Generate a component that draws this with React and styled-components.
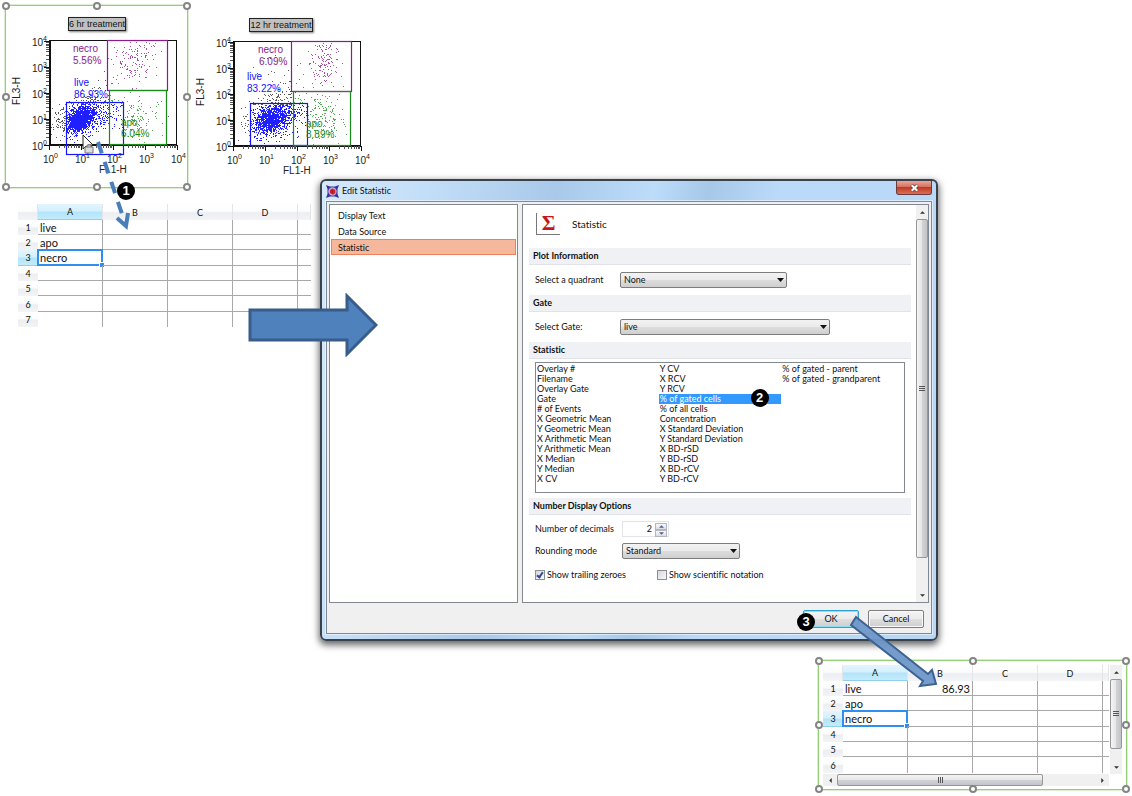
import React, { useState } from "react";
import styled, { createGlobalStyle, css } from "styled-components";

const GlobalStyle = createGlobalStyle`
  * {
    box-sizing: border-box;
  }

  body {
    margin: 0;
    background: #fff;
    color: #111;
    font-family: Lato, "Open Sans", sans-serif;
    font-size: 9px;
    font-variant-ligatures: none;
    line-height: 10px;
  }

  button,
  input,
  select {
    font: inherit;
    font-variant-ligatures: none;
    color: inherit;
    margin: 0;
  }
`;

/* ---------- scatter plots ---------- */

const PLOT_W = 128;
const PLOT_H = 105;

const GATE_COLORS = {
  live: "#1414ff",
  necro: "#8b1a8b",
  apo: "#1a8b1a",
  none: "#222",
};

const makeRandom = (seed) => {
  let s = seed;
  return () => {
    s = (s * 16807) % 2147483647;
    return s / 2147483647;
  };
};

const makeDots = ({ seed, clusters, gates }) => {
  const random = makeRandom(seed);
  const gauss = () =>
    Math.sqrt(-2 * Math.log(random())) * Math.cos(2 * Math.PI * random());
  const paths = { live: "", necro: "", apo: "", none: "" };

  clusters.forEach(([n, cx, cy, sx, sy, tilt]) => {
    for (let i = 0; i < n; i++) {
      const g = gauss();
      const x = Math.round(cx + g * sx);
      const y = Math.round(cy + gauss() * sy - g * tilt);
      if (x < 2 || x > PLOT_W - 3 || y < 2 || y > PLOT_H - 2) continue;
      const gate = Object.keys(gates).find((key) => {
        const [gx, gy, gw, gh] = gates[key];
        return x > gx && x < gx + gw && y > gy && y < gy + gh;
      });
      paths[gate || "none"] += `M${x} ${y}h1`;
    }
  });
  return paths;
};

const plots = [
  {
    title: "6 hr treatment",
    selected: true,
    seed: 4711,
    gates: {
      live: [17, 63, 57, 52],
      necro: [58, 1, 60, 50],
      apo: [60, 51, 57, 54],
    },
    clusters: [
      [1250, 30, 79, 6, 6, 2],
      [620, 38, 76, 13, 9, 3],
      [45, 12, 79, 5, 9, 0],
      [26, 40, 60, 16, 8, 0],
      [110, 86, 18, 9, 12, 5],
      [45, 84, 26, 14, 14, 0],
      [120, 87, 78, 11, 12, 0],
    ],
    labels: [
      ["necro", "necro", 24, 12],
      ["necro", "5.56%", 24, 24],
      ["live", "live", 25, 46],
      ["live", "86.93%", 25, 58],
      ["apo", "apo", 72, 86],
      ["apo", "6.04%", 72, 97],
    ],
  },
  {
    title: "12 hr treatment",
    seed: 90210,
    gates: {
      live: [17, 63, 57, 42],
      necro: [58, 1, 60, 50],
      apo: [60, 51, 57, 54],
    },
    clusters: [
      [950, 37, 78, 8, 6, 2],
      [620, 43, 77, 13, 9, 3],
      [14, 12, 80, 4, 9, 0],
      [80, 45, 58, 13, 6, 3],
      [14, 40, 30, 12, 12, 0],
      [120, 91, 19, 7, 12, 4],
      [40, 84, 28, 14, 12, 0],
      [160, 88, 75, 11, 12, 0],
    ],
    labels: [
      ["necro", "necro", 25, 12],
      ["necro", "6.09%", 26, 24],
      ["live", "live", 14, 39],
      ["live", "83.22%", 14, 51],
      ["apo", "apo", 73, 86],
      ["apo", "8.89%", 73, 97],
    ],
  },
].map((plot) => ({ ...plot, dots: makeDots(plot) }));

const DECADES = [0, 1, 2, 3, 4];
const MINOR = [0.3, 0.48, 0.6, 0.7, 0.78, 0.85, 0.9, 0.95];

const minorTicks = () => {
  let d = "";
  [0, 1, 2, 3].forEach((decade) => {
    MINOR.forEach((m) => {
      d += `M${Math.round((decade + m) * 32)} ${PLOT_H}v3`;
      d += `M0 ${Math.round(PLOT_H - (decade + m) * 26)}h-3`;
    });
  });
  return d;
};

const Plot = ({ plot }) => (
  <Figure>
    <figcaption>{plot.title}</figcaption>
    <svg width="184" height="146" viewBox="0 0 184 146" role="img">
      <g transform="translate(44 9)">
        <g shapeRendering="crispEdges" fill="none">
          {Object.entries(plot.dots).map(([gate, d]) => (
            <path
              key={gate}
              d={d}
              transform="translate(0 .5)"
              stroke={GATE_COLORS[gate]}
              strokeOpacity={gate === "live" ? 0.95 : 0.75}
            />
          ))}
          <path d={`M0 .5H${PLOT_W}M${PLOT_W - 0.5} 0V${PLOT_H}`} stroke="#111" />
          <path d={`M.5 0V${PLOT_H}H${PLOT_W}`} stroke="#111" strokeWidth="2" />
          <path d={minorTicks()} stroke="#555" />
          {DECADES.map((n) => (
            <path
              key={n}
              d={`M${n * 32} ${PLOT_H}v5M0 ${PLOT_H - n * 26}h-5`}
              stroke="#111"
            />
          ))}
        </g>
        {Object.entries(plot.gates).map(([gate, [x, y, w, h]]) => (
          <rect
            key={gate}
            x={x + 0.5}
            y={y - 0.5}
            width={w}
            height={h}
            fill="none"
            stroke={GATE_COLORS[gate]}
            strokeWidth="1.2"
          />
        ))}
        <PlotText>
          {DECADES.map((n) => (
            <React.Fragment key={n}>
              <text x="-17" y={PLOT_H - n * 26 + 5}>10</text>
              <text className="exponent" x="-6" y={PLOT_H - n * 26}>{n}</text>
              <text x={n * 32 - 6} y={PLOT_H + 18}>10</text>
              <text className="exponent" x={n * 32 + 5} y={PLOT_H + 13}>{n}</text>
            </React.Fragment>
          ))}
          <text x="50" y={PLOT_H + 28}>FL1-H</text>
          <text textAnchor="middle" transform="translate(-29 51) rotate(-90)">
            FL3-H
          </text>
          {plot.labels.map(([gate, text, x, y]) => (
            <text key={text} x={x} y={y} fill={GATE_COLORS[gate]}>{text}</text>
          ))}
        </PlotText>
      </g>
    </svg>
    {plot.selected && <Selection />}
  </Figure>
);

/* ---------- small parts ---------- */

const Selection = () => (
  <SelectionFrame>
    {[0, 50, 100].flatMap((x) =>
      [0, 50, 100]
        .filter((y) => x !== 50 || y !== 50)
        .map((y) => <Handle key={`${x}-${y}`} $x={x} $y={y} />)
    )}
  </SelectionFrame>
);

const Triangle = ({ turn = 0 }) => (
  <svg width="5" height="5" viewBox="0 0 6 6" aria-hidden="true">
    <path d="M0 4.5L3 1.5L6 4.5Z" fill="#333" transform={`rotate(${turn} 3 3)`} />
  </svg>
);

const ScrollBar = ({ horizontal, size }) => (
  <Bar $horizontal={horizontal} aria-hidden="true">
    <i><Triangle turn={horizontal ? -90 : 0} /></i>
    <Track $horizontal={horizontal}>
      <Thumb $horizontal={horizontal} $size={size}>
        <svg width="7" height="7" viewBox="0 0 7 7">
          <path
            d="M0 1.5H6M0 3.5H6M0 5.5H6"
            stroke="#555"
            transform={horizontal ? "rotate(90 3.5 3.5)" : undefined}
          />
        </svg>
      </Thumb>
    </Track>
    <i><Triangle turn={horizontal ? 90 : 180} /></i>
  </Bar>
);

const Sheet = ({ rows, value }) => {
  const names = ["live", "apo", "necro"];
  return (
    <SheetTable>
      <colgroup>
        <col className="row-number" />
        <col className="wide" />
        <col className="wide" />
        <col className="wide" />
        <col className="wide" />
        <col />
      </colgroup>
      <thead>
        <tr>
          <th></th>
          <th className="active">A</th>
          <th>B</th>
          <th>C</th>
          <th>D</th>
          <th></th>
        </tr>
      </thead>
      <tbody>
        {Array.from({ length: rows }, (_, i) => (
          <tr key={i}>
            <th className={i === 2 ? "active" : undefined}>{i + 1}</th>
            <td className={i === 2 ? "selected" : undefined}>{names[i]}</td>
            <td className="number">{i === 0 ? value : null}</td>
            <td></td>
            <td></td>
            <td></td>
          </tr>
        ))}
      </tbody>
    </SheetTable>
  );
};

/* ---------- dialog ---------- */

const pages = ["Display Text", "Data Source", "Statistic"];

const statistics = [
  "Overlay #",
  "Filename",
  "Overlay Gate",
  "Gate",
  "# of Events",
  "X Geometric Mean",
  "Y Geometric Mean",
  "X Arithmetic Mean",
  "Y Arithmetic Mean",
  "X Median",
  "Y Median",
  "X CV",
  "Y CV",
  "X RCV",
  "Y RCV",
  "% of gated cells",
  "% of all cells",
  "Concentration",
  "X Standard Deviation",
  "Y Standard Deviation",
  "X BD-rSD",
  "Y BD-rSD",
  "X BD-rCV",
  "Y BD-rCV",
  "% of gated - parent",
  "% of gated - grandparent",
];

const SelectBox = ({ id, width, options }) => (
  <SelectWrap $width={width}>
    <select id={id}>
      {options.map((option) => (
        <option key={option}>{option}</option>
      ))}
    </select>
    <svg width="7" height="4" viewBox="0 0 7 4" aria-hidden="true">
      <path d="M0 0H7L3.5 4Z" fill="#111" />
    </svg>
  </SelectWrap>
);

const EditStatistic = () => {
  const [page, setPage] = useState("Statistic");
  const [statistic, setStatistic] = useState("% of gated cells");
  const [decimals, setDecimals] = useState(2);

  return (
    <Dialog role="dialog" aria-labelledby="dialog-title">
      <TitleBar>
        <svg width="13" height="13" viewBox="0 0 13 13" aria-hidden="true">
          <path
            d="M0 0L4 1.5H9L13 0L11.5 4V9L13 13L9 11.5H4L0 13L1.5 9V4Z"
            fill="#3b2f9c"
          />
          <circle cx="6.5" cy="6.5" r="4.2" fill="#b9a9d8" />
          <path d="M4 5L6.5 3.5L9.3 5V8L7 9.8L4 8Z" fill="#d51f2c" />
          <path d="M6.3 5V8.5" stroke="#7d1020" strokeWidth=".8" />
        </svg>
        <h1 id="dialog-title">Edit Statistic</h1>
        <CloseButton aria-label="Close">
          <svg width="9" height="8" viewBox="0 0 9 8">
            <path d="M1.5 1L7.5 7M7.5 1L1.5 7" stroke="#6b3a3a" strokeWidth="3.4" />
            <path d="M1.7 1.2L7.3 6.8M7.3 1.2L1.7 6.8" stroke="#fff" strokeWidth="2" />
          </svg>
        </CloseButton>
      </TitleBar>

      <DialogBody>
        <Panes>
          <PageList>
            {pages.map((name) => (
              <PageButton
                key={name}
                $active={name === page}
                onClick={() => setPage(name)}
              >
                {name}
              </PageButton>
            ))}
          </PageList>

          <Settings>
            <Form>
              <FormTitle>
                <SumIcon aria-hidden="true">Σ</SumIcon>
                Statistic
              </FormTitle>

              <SectionTitle>Plot Information</SectionTitle>
              <Field $height={30} $label={85}>
                <label htmlFor="quadrant">Select a quadrant</label>
                <SelectBox id="quadrant" width={167} options={["None"]} />
              </Field>

              <SectionTitle>Gate</SectionTitle>
              <Field $height={30} $label={85}>
                <label htmlFor="gate">Select Gate:</label>
                <SelectBox id="gate" width={210} options={["live", "apo", "necro"]} />
              </Field>

              <SectionTitle>Statistic</SectionTitle>
              <StatisticList role="listbox" aria-label="Statistic">
                {statistics.map((name) => (
                  <StatisticItem
                    key={name}
                    role="option"
                    aria-selected={name === statistic}
                    $active={name === statistic}
                    onClick={() => setStatistic(name)}
                  >
                    {name}
                    {name === "% of gated cells" && <Badge $x={92} $y={-5}>2</Badge>}
                  </StatisticItem>
                ))}
              </StatisticList>

              <SectionTitle>Number Display Options</SectionTitle>
              <Options>
                <Field $height={22} $label={87}>
                  <label htmlFor="decimals">Number of decimals</label>
                  <Spinner>
                    <input
                      id="decimals"
                      value={decimals}
                      onChange={(e) => setDecimals(Number(e.target.value) || 0)}
                    />
                    <div>
                      <button aria-label="More" onClick={() => setDecimals(decimals + 1)}>
                        <Triangle />
                      </button>
                      <button
                        aria-label="Fewer"
                        onClick={() => setDecimals(Math.max(0, decimals - 1))}
                      >
                        <Triangle turn={180} />
                      </button>
                    </div>
                  </Spinner>
                </Field>
                <Field $height={22} $label={87}>
                  <label htmlFor="rounding">Rounding mode</label>
                  <SelectBox id="rounding" width={118} options={["Standard"]} />
                </Field>
                <Checks>
                  <label>
                    <input type="checkbox" defaultChecked />
                    Show trailing zeroes
                  </label>
                  <label>
                    <input type="checkbox" />
                    Show scientific notation
                  </label>
                </Checks>
              </Options>
            </Form>
            <ScrollBar size={92} />
          </Settings>
        </Panes>

        <Footer>
          <PushButton $primary>
            OK
            <Badge $x={-7} $y={2}>3</Badge>
          </PushButton>
          <PushButton>Cancel</PushButton>
        </Footer>
      </DialogBody>

      <BlockArrow width="130" height="64" viewBox="0 0 130 64" aria-hidden="true">
        <path
          d="M2 17H99V3L128 32L99 61V47H2Z"
          fill="#4f81bd"
          stroke="#385d8a"
          strokeWidth="3"
        />
      </BlockArrow>
    </Dialog>
  );
};

const App = () => (
  <Page>
    <GlobalStyle />
    <PlotRow>
      {plots.map((plot) => (
        <Plot key={plot.title} plot={plot} />
      ))}
    </PlotRow>

    <Middle>
      <SourceSheet>
        <Sheet rows={7} />
        <DragPath width="60" height="100" viewBox="0 0 60 100" aria-hidden="true">
          <path
            d="M7 0V14L10 11L13 17L15 16L12 10H17Z"
            fill="#fff"
            stroke="#222"
            strokeWidth="1"
          />
          <path d="M9 12H17V18H9ZM11 12V10H15V12" fill="#ddd" stroke="#777" />
          <path
            d="M22 7L50 91"
            fill="none"
            stroke="#4a7ebb"
            strokeWidth="4"
            strokeDasharray="12 9"
          />
          <path d="M41 83L50 91L52 78" fill="none" stroke="#4a7ebb" strokeWidth="4" />
        </DragPath>
        <Badge $x={99} $y={-22}>1</Badge>
      </SourceSheet>
      <EditStatistic />
    </Middle>

    <Result>
      <div>
        <Sheet rows={6} value="86.93" />
        <ScrollBar horizontal size={80} />
      </div>
      <ScrollBar size={86} />
      <Selection />
      <ResultArrow width="92" height="74" viewBox="0 0 92 74" aria-hidden="true">
        <path
          d="M8 3L80 60L84 56L88 70L72 72L75 67L3 11Z"
          fill="#6f97c9"
          fillOpacity=".95"
          stroke="#3c6292"
          strokeWidth="2"
        />
      </ResultArrow>
    </Result>
  </Page>
);

/* ---------- styles ---------- */

const Page = styled.main`
  display: flex;
  flex-direction: column;
  overflow: hidden;
`;

const PlotRow = styled.section`
  display: flex;
  height: 179px;
  padding: 5px 5px 0;
`;

const Figure = styled.figure`
  position: relative;
  display: flex;
  flex-direction: column;
  align-items: center;
  flex: none;
  width: 184px;
  height: 184px;
  margin: 0;
  padding-top: 12px;
  font-family: "Liberation Sans", Arial, sans-serif;

  & + & {
    padding-top: 13px;
  }

  figcaption {
    padding: 1px 0;
    border: 1px solid #222;
    background: #c0c0c0;
    box-shadow: 1px 1px 2px rgba(0, 0, 0, 0.5);
    color: #111;
    font-size: 9px;
    line-height: 10px;
  }

  svg {
    flex: none;
    overflow: visible;
  }
`;

const PlotText = styled.g`
  font-size: 10px;
  fill: #222;

  .exponent {
    font-size: 7px;
  }
`;

const SelectionFrame = styled.div`
  position: absolute;
  inset: 0 1px 1px 0;
  border: 1px solid #92d078;
  box-shadow: 0 0 0 1px rgba(146, 208, 120, 0.35);
  pointer-events: none;
`;

const Handle = styled.span`
  position: absolute;
  left: ${({ $x }) => $x}%;
  top: ${({ $y }) => $y}%;
  width: 8px;
  height: 8px;
  margin: -4px;
  border: 2px solid #858585;
  border-radius: 50%;
  background: #fff;
`;

const Badge = styled.span`
  position: absolute;
  left: ${({ $x }) => $x}px;
  top: ${({ $y }) => $y}px;
  z-index: 3;
  width: 18px;
  height: 18px;
  border-radius: 50%;
  background: #000;
  color: #fff;
  font: 700 13px/18px "Liberation Sans", Arial, sans-serif;
  text-align: center;
`;

const Middle = styled.section`
  display: flex;
  align-items: flex-start;
  gap: 9px;
  padding: 0 194px 0 18px;
`;

const SourceSheet = styled.div`
  position: relative;
  flex: none;
  width: 293px;
  margin-top: 25px;
`;

const headerFill = css`
  background: linear-gradient(#fff 0%, #fbfcfd 45%, #eceef1 55%, #f3f4f6 100%);
`;

const activeFill = css`
  background: linear-gradient(#e3f5fd 0%, #d5f0fd 45%, #b3e4fa 55%, #c4ebfc 100%);
`;

const SheetTable = styled.table`
  width: 100%;
  border-collapse: separate;
  border-spacing: 0;
  table-layout: fixed;

  .row-number {
    width: 20px;
  }

  .wide {
    width: 65px;
  }

  tr {
    height: 15px;
  }

  thead tr,
  tbody tr:nth-child(3n) {
    height: 16px;
  }

  th {
    padding: 0;
    ${headerFill}
    font-size: 9px;
    font-weight: 400;
    line-height: 13px;
  }

  thead th {
    border-right: 1px solid #e3e5e8;
  }

  th.active {
    ${activeFill}
    border-bottom: 1px solid #8fd0ee;
  }

  td {
    position: relative;
    padding: 0 2px;
    border-right: 1px solid #a8a8a8;
    border-bottom: 1px solid #a8a8a8;
    font-size: 11px;
    line-height: 13px;
  }

  td:last-child {
    border-right: 0;
  }

  tr:last-child td {
    border-bottom: 0;
  }

  .number {
    text-align: right;
  }

  .selected::before {
    content: "";
    position: absolute;
    inset: -1px -1px -1px -1px;
    border: 2px solid #2f8ff0;
  }

  .selected::after {
    content: "";
    position: absolute;
    right: -2px;
    bottom: -2px;
    width: 4px;
    height: 4px;
    background: #2f8ff0;
    outline: 1px solid #fff;
  }
`;

const DragPath = styled.svg`
  position: absolute;
  left: 58px;
  top: -69px;
`;

const Dialog = styled.section`
  position: relative;
  flex: 1;
  min-width: 0;
  padding: 0 4px 5px;
  border: 2px solid #39424c;
  border-radius: 6px;
  background: linear-gradient(
    100deg,
    #d5e9fb 0%,
    #c3def8 15%,
    #a9c9ea 34%,
    #bcdcfa 48%,
    #a6c8e9 56%,
    #bbdafa 66%,
    #b7d7f5 100%
  );
  box-shadow: 0 3px 7px 1px rgba(0, 0, 0, 0.6);
`;

const TitleBar = styled.header`
  display: flex;
  align-items: center;
  gap: 3px;
  height: 20px;

  h1 {
    flex: 1;
    margin: 0;
    font-size: 9px;
    font-weight: 400;
  }
`;

const CloseButton = styled.button`
  display: grid;
  place-items: center;
  align-self: flex-start;
  width: 36px;
  height: 14px;
  padding: 0;
  border: 1px solid #6b3b3b;
  border-top: 0;
  border-radius: 0 0 3px 3px;
  background: linear-gradient(#e9a698 0%, #d6715f 45%, #bf3a22 50%, #d9705a 100%);
`;

const DialogBody = styled.div`
  padding: 2px 2px 0;
  border: 1px solid #7e8a99;
  outline: 1px solid rgba(255, 255, 255, 0.5);
  background: #f0f0f0;
`;

const Panes = styled.div`
  display: flex;
  gap: 4px;
`;

const PageList = styled.nav`
  flex: none;
  width: 189px;
  padding: 2px 1px;
  border: 1px solid #828790;
  background: #fff;
`;

const PageButton = styled.button`
  display: block;
  width: 100%;
  height: 16px;
  padding: 0 6px;
  border: 1px solid ${({ $active }) => ($active ? "#f0805c" : "transparent")};
  background: ${({ $active }) => ($active ? "#f6b89c" : "none")};
  text-align: left;
  line-height: 13px;
`;

const Settings = styled.div`
  display: flex;
  flex: 1;
  min-width: 0;
  border: 1px solid #828790;
  background: #fff;
`;

const Form = styled.div`
  flex: 1;
  padding: 0 5px 14px 6px;
`;

const FormTitle = styled.div`
  display: flex;
  align-items: center;
  gap: 12px;
  height: 43px;
  padding: 0 7px 6px;
  font-size: 10px;
`;

const SumIcon = styled.span`
  width: 24px;
  height: 22px;
  border: solid #777;
  border-width: 0 0 1px 1px;
  color: #c8141c;
  font: 700 21px/20px "Liberation Serif", serif;
  text-align: center;
`;

const SectionTitle = styled.h2`
  height: 17px;
  margin: 0;
  padding: 0 4px;
  border-bottom: 1px solid #e2e3e8;
  background: #f0f1f5;
  color: #111;
  font-size: 9px;
  font-weight: 700;
  line-height: 16px;
`;

const Field = styled.div`
  display: flex;
  align-items: center;
  height: ${({ $height }) => $height}px;
  padding-left: 6px;

  label {
    flex: none;
    width: ${({ $label }) => $label}px;
  }
`;

const SelectWrap = styled.div`
  position: relative;
  width: ${({ $width }) => $width}px;

  select {
    display: block;
    width: 100%;
    height: 16px;
    padding: 0 3px;
    appearance: none;
    border: 1px solid #7d7d7d;
    border-radius: 2px;
    background: linear-gradient(#f2f2f2 0%, #ebebeb 48%, #dddddd 52%, #cfcfcf 100%);
    line-height: 14px;
  }

  svg {
    position: absolute;
    right: 3px;
    top: 6px;
    pointer-events: none;
  }
`;

const StatisticList = styled.ul`
  display: grid;
  grid-template-columns: repeat(3, 1fr);
  grid-template-rows: repeat(12, 10px);
  grid-auto-flow: column;
  height: 131px;
  margin: 3px 6px 5px;
  padding: 1px 0;
  border: 1px solid #828790;
  list-style: none;
`;

const StatisticItem = styled.li`
  position: relative;
  padding-left: 1px;
  white-space: nowrap;
  line-height: 10px;

  ${({ $active }) =>
    $active &&
    css`
      background: #3399ff;
      color: #fff;
    `}
`;

const Options = styled.div`
  padding-top: 3px;
`;

const Spinner = styled.div`
  display: flex;
  height: 16px;
  padding: 1px;
  border: 1px solid #e1e4ea;

  input {
    width: 31px;
    padding: 0 3px;
    border: 0;
    background: #fff;
    text-align: right;
  }

  div {
    display: grid;
    width: 12px;
  }

  button {
    display: grid;
    place-items: center;
    padding: 0;
    border: 1px solid #b4b6bd;
    background: linear-gradient(#fafafa, #dcdcdc);
  }

  path {
    fill: #4a5fa8;
  }
`;

const Checks = styled.div`
  display: flex;
  align-items: center;
  height: 26px;
  padding-left: 6px;

  label {
    display: flex;
    align-items: center;
    gap: 2px;
    width: 122px;
    white-space: nowrap;
  }

  input {
    display: flex;
    align-items: flex-start;
    justify-content: center;
    width: 10px;
    height: 10px;
    appearance: none;
    border: 1px solid #8e8f8f;
    background: linear-gradient(135deg, #d5d8dc, #fafafa);
  }

  input:checked::before {
    content: "";
    box-sizing: border-box;
    width: 4px;
    height: 7px;
    border: solid #31479b;
    border-width: 0 2px 2px 0;
    transform: rotate(35deg);
  }
`;

const Footer = styled.footer`
  display: flex;
  justify-content: flex-end;
  gap: 9px;
  padding: 7px 5px 5px;
`;

const PushButton = styled.button`
  position: relative;
  width: 56px;
  height: 18px;
  padding: 0;
  border: 1px solid ${({ $primary }) => ($primary ? "#2ba3d4" : "#7d7d7d")};
  border-radius: 2px;
  background: linear-gradient(#f3f3f3 0%, #ebebeb 48%, #dddddd 52%, #cfcfcf 100%);
  box-shadow: inset 0 0 0 1px ${({ $primary }) => ($primary ? "#8fdcf5" : "#fafafa")};
`;

const BlockArrow = styled.svg`
  position: absolute;
  left: -74px;
  top: 112px;
`;

const Bar = styled.div`
  display: flex;
  flex: none;
  flex-direction: ${({ $horizontal }) => ($horizontal ? "row" : "column")};
  width: ${({ $horizontal }) => ($horizontal ? "auto" : "12px")};
  height: ${({ $horizontal }) => ($horizontal ? "12px" : "auto")};
  background: #f0f0f0;

  i {
    display: grid;
    flex: none;
    place-items: center;
    width: ${({ $horizontal }) => ($horizontal ? "14px" : "12px")};
    height: ${({ $horizontal }) => ($horizontal ? "12px" : "14px")};
  }
`;

const Track = styled.div`
  display: flex;
  flex: 1;
  flex-direction: ${({ $horizontal }) => ($horizontal ? "row" : "column")};
`;

const Thumb = styled.div`
  display: grid;
  flex: 0 0 ${({ $size }) => $size}%;
  place-items: center;
  border: 1px solid #979797;
  border-radius: 2px;
  background: linear-gradient(
    ${({ $horizontal }) => ($horizontal ? "180deg" : "90deg")},
    #f4f4f4 0%,
    #e6e6e8 48%,
    #d2d3d6 52%,
    #c3c4c8 100%
  );
`;

const Result = styled.section`
  position: relative;
  display: flex;
  align-self: flex-end;
  width: 310px;
  height: 131px;
  margin: 19px 4px 5px 0;
  padding: 5px 6px 5px 5px;

  & > div:first-child {
    display: flex;
    flex: 1;
    flex-direction: column;
    justify-content: space-between;
    gap: 1px;
    min-width: 0;
  }

  & > div:nth-child(2) {
    margin: 0 0 12px 1px;
  }
`;

const ResultArrow = styled.svg`
  position: absolute;
  left: 30px;
  top: -46px;
  z-index: 2;
`;

export default App;
